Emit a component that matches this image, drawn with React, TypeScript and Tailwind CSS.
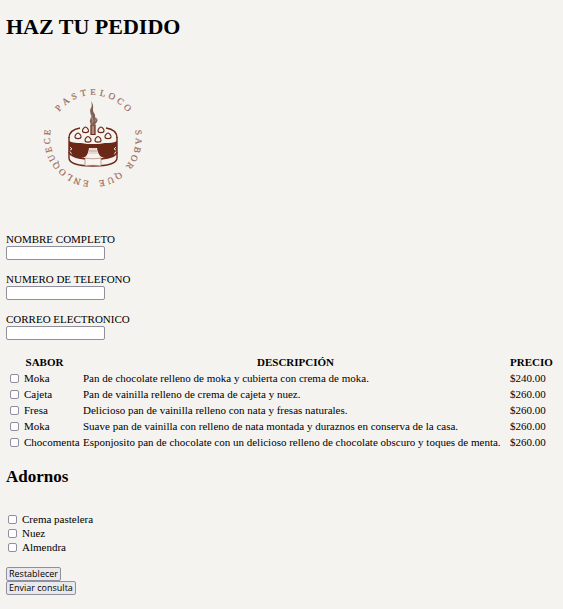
import React from 'react';

const fields = [
  { id: 'nombre', label: 'NOMBRE COMPLETO', type: 'text' },
  { id: 'telefono', label: 'NUMERO DE TELEFONO', type: 'tel' },
  { id: 'correo', label: 'CORREO ELECTRONICO', type: 'email' },
];

const cakes = [
  { id: 'moka', name: 'Moka', text: 'Pan de chocolate relleno de moka y cubierta con crema de moka.', price: '$240.00' },
  { id: 'cajeta', name: 'Cajeta', text: 'Pan de vainilla relleno de crema de cajeta y nuez.', price: '$260.00' },
  { id: 'fresa', name: 'Fresa', text: 'Delicioso pan de vainilla relleno con nata y fresas naturales.', price: '$260.00' },
  { id: 'durazno', name: 'Moka', text: 'Suave pan de vainilla con relleno de nata montada y duraznos en conserva de la casa.', price: '$260.00' },
  { id: 'menta', name: 'Chocomenta', text: 'Esponjosito pan de chocolate con un delicioso relleno de chocolate obscuro y toques de menta.', price: '$260.00' },
];

const toppings = ['Crema pastelera', 'Nuez', 'Almendra'];

const checkbox =
  'block size-[9px] shrink-0 appearance-none rounded-[2px] border border-[#8f8f9d] bg-white checked:bg-[#0060df]';
const button =
  'h-[14px] rounded-[2px] border border-[#8f8f9d] bg-[#e9e9ed] px-0.5 font-["Open_Sans",sans-serif] text-[9px] leading-[12px]';

function Strawberry({ x, y }: { x: number; y: number }) {
  return (
    <path
      d="M0-3C1.2-2.8 3.1-.6 3 .9 2.8 2.5 1.4 2.6 0 2.6S-2.8 2.5-3 .9C-3.1-.6-1.2-2.8 0-3Z"
      transform={`translate(${x} ${y})`}
      fill="#f4f3ef"
      stroke="#6b2817"
      strokeWidth="1.2"
    />
  );
}

function Arc({ word, start, end }: { word: string; start: number; end: number }) {
  const letters = word.split('');
  return (
    <>
      {letters.map((letter, i) => (
        <text
          key={i}
          x="87"
          y="45"
          textAnchor="middle"
          transform={`rotate(${start + ((end - start) * i) / (letters.length - 1)} 87 88)`}
        >
          {letter}
        </text>
      ))}
    </>
  );
}

function Logo() {
  return (
    <svg viewBox="0 0 174 174" className="block size-[174px]" role="img" aria-label="Pasteloco">
      <g
        fill="#9b6a5b"
        stroke="#9b6a5b"
        strokeWidth="0.2"
        fontFamily="Liberation Serif, serif"
        fontSize="9"
      >
        <Arc word="PASTELOCO" start={-49} end={49} />
        <Arc word="SABOR" start={83} end={127} />
        <Arc word="QUE" start={146} end={169} />
        <Arc word="ENLOQUECE" start={189} end={277} />
      </g>
      <g fill="none" stroke="#6b2817" strokeWidth="1.4">
        <path d="M63 87v21c0 5 9 8 24 8s24-3 24-8V87" />
        <path d="M63 88c0-6 5-9 11-10M100 78c7 1 11 4 11 10" />
        <path d="M63 102c1 4 7 6 17 7M95 109c10-1 15-3 16-7" />
      </g>
      <path
        fill="#6b2817"
        d="M63 91c4 2 8 2 12 2 4 1 8 1 12 1s8 0 12-1c5 0 8 0 12-2v10l-2 1c-1 4-4 6-9 6-6 0-8-4-9-10h-8c-1 7-3 10-9 10-5 0-8-2-9-6l-2-1Z"
      />
      <path d="M84 98h6l2 6h-10z" fill="#e6d8d1" />
      <path d="M83 101h8" stroke="#b28b7d" strokeWidth=".6" />
      <path d="M64 97l2 2-2 1M110 97l-2 2 2 1" fill="none" stroke="#f4f3ef" strokeWidth=".9" />
      <path d="M79 108c5 1 11 1 16 0v8c-5-1-11-1-16 0Z" fill="#f8f5f1" stroke="#9b6a5b" strokeWidth=".6" />
      <path d="M85 75h4v9.500h-4z" fill="#b28b7d" stroke="#6b2817" strokeWidth="1.2" />
      <path
        d="M86 75c-4-3-1-6-1-9 0-3-2-5 0-8 1-2 1-4 0-7 3 4 2 7 2 9 0 3 3 4 2 7 4 2 3 5-1 8Z"
        fill="#806056"
      />
      <path d="M86 73c3-3-2-5 0-8M89 71c2-1 1-3 0-4" fill="none" stroke="#d1c3bc" strokeWidth=".6" />
      <Strawberry x={79.5} y={80} />
      <Strawberry x={95} y={80} />
      <Strawberry x={72} y={86} />
      <Strawberry x={102} y={86} />
      <Strawberry x={82} y={89.5} />
      <Strawberry x={92} y={89.5} />
    </svg>
  );
}

export default function App() {
  return (
    <main className='min-h-screen bg-[#f4f3ef] px-1.5 pt-3.5 pb-3 font-["Liberation_Serif",serif] text-[11px] leading-[14px] text-black'>
      <h1 className="text-[22px] leading-[26px] font-bold">HAZ TU PEDIDO</h1>
      <div className="mt-2.5">
        <Logo />
      </div>
      <form className="mt-2" onSubmit={(e) => e.preventDefault()}>
        <div className="flex flex-col gap-3">
          {fields.map((f) => (
            <div key={f.id} className="flex flex-col items-start">
              <label htmlFor={f.id}>{f.label}</label>
              <input
                id={f.id}
                type={f.type}
                className="h-[14px] w-[99px] rounded-[2px] border border-[#8f8f9d] bg-white px-0.5"
              />
            </div>
          ))}
        </div>
        <table className="mt-3.5">
          <thead>
            <tr className="h-4">
              <th className="w-[77px] min-w-[77px] text-center">SABOR</th>
              <th className="w-[427px] pr-0.5 text-center">DESCRIPCIÓN</th>
              <th className="text-left">PRECIO</th>
            </tr>
          </thead>
          <tbody>
            {cakes.map((c) => (
              <tr key={c.id} className="h-4">
                <td className="pl-1">
                  <label className="flex items-center gap-[5px]">
                    <input type="checkbox" name={c.id} className={checkbox} />
                    {c.name}
                  </label>
                </td>
                <td className="pr-0.5">{c.text}</td>
                <td>{c.price}</td>
              </tr>
            ))}
          </tbody>
        </table>
        <h2 className="mt-[17px] text-[17px] leading-5 font-bold">Adornos</h2>
        <div className="mt-[25px] pl-0.5">
          {toppings.map((t) => (
            <label key={t} className="flex items-center gap-[5px]">
              <input type="checkbox" className={checkbox} />
              {t}
            </label>
          ))}
        </div>
        <div className="mt-[13px] flex flex-col items-start">
          <button type="reset" className={button}>Restablecer</button>
          <button type="submit" className={button}>Enviar consulta</button>
        </div>
      </form>
    </main>
  );
}
